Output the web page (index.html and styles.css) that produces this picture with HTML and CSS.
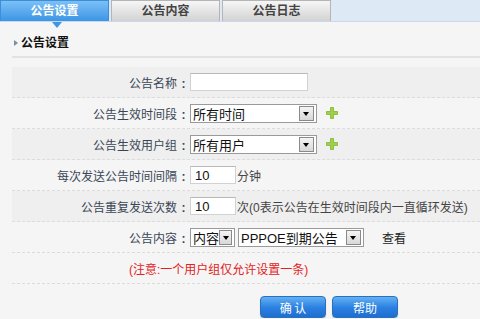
FILE: index.html
```html
<!DOCTYPE html>
<html lang="zh-CN">
<head>
    <meta charset="UTF-8">
    <title>公告设置</title>
    <link rel="stylesheet" href="styles.css">
</head>
<body>

    <div class="tabs">
        <div class="tab active">公告设置</div>
        <div class="tab">公告内容</div>
        <div class="tab">公告日志</div>
    </div>

    <h3 class="section-title">公告设置</h3>

    <div class="form">
        <div class="row shade">
            <label class="label">公告名称<span class="colon">:</span></label>
            <div class="field"><input class="text wide" type="text"></div>
        </div>
        <div class="row">
            <label class="label">公告生效时间段<span class="colon">:</span></label>
            <div class="field">
                <div class="select" style="width:127px"><span>所有时间</span><i class="arrow"></i></div>
                <svg class="plus" width="12" height="12" viewBox="0 0 12 12"><path d="M4.5 0.5h3v4h4v3h-4v4h-3v-4h-4v-3h4z" fill="#9fd04a" stroke="#7fb52e" stroke-width="0.8" stroke-linejoin="round"/></svg>
            </div>
        </div>
        <div class="row shade">
            <label class="label">公告生效用户组<span class="colon">:</span></label>
            <div class="field">
                <div class="select" style="width:127px"><span>所有用户</span><i class="arrow"></i></div>
                <svg class="plus" width="12" height="12" viewBox="0 0 12 12"><path d="M4.5 0.5h3v4h4v3h-4v4h-3v-4h-4v-3h4z" fill="#9fd04a" stroke="#7fb52e" stroke-width="0.8" stroke-linejoin="round"/></svg>
            </div>
        </div>
        <div class="row">
            <label class="label">每次发送公告时间间隔<span class="colon">:</span></label>
            <div class="field"><input class="text short" type="text" value="10"><span class="unit">分钟</span></div>
        </div>
        <div class="row shade">
            <label class="label">公告重复发送次数<span class="colon">:</span></label>
            <div class="field"><input class="text short" type="text" value="10"><span class="unit">次(0表示公告在生效时间段内一直循环发送)</span></div>
        </div>
        <div class="row">
            <label class="label">公告内容<span class="colon">:</span></label>
            <div class="field">
                <div class="select" style="width:45px"><span>内容</span><i class="arrow"></i></div>
                <div class="select" style="width:126px"><span>PPPOE到期公告</span><i class="arrow"></i></div>
                <a class="view">查看</a>
            </div>
        </div>
        <div class="row notice">(注意:一个用户组仅允许设置一条)</div>
    </div>

    <div class="buttons">
        <button class="btn">确 认</button>
        <button class="btn">帮助</button>
    </div>

</body>
</html>
```

FILE: styles.css
```css
body {
    margin: 0;
    background: #f5f5f5;
    font-family: "Liberation Sans", "Noto Sans CJK SC", sans-serif;
    font-size: 12px;
    color: #333;
}

/* Вкладки */
.tabs {
    display: flex;
    height: 21px;
    background: #dde9f5;
    border-bottom: 1px solid #c9d9e9;
}

.tab {
    position: relative;
    width: 107px;
    margin-right: 2px;
    text-align: center;
    line-height: 20px;
    font-weight: bold;
    color: #444;
    border: 1px solid #b5b5b5;
    border-bottom: none;
    background: linear-gradient(#f6f6f6, #d2d2d2);
}

.tab.active {
    color: #fff;
    border-color: #3b8fd8;
    background: linear-gradient(#7cc0f6, #3c95e6);
}

.tab.active::after {
    content: "";
    position: absolute;
    left: 51px;
    top: 21px;
    border-left: 5px solid transparent;
    border-right: 5px solid transparent;
    border-top: 6px solid #3c95e6;
}

/* Заголовок */
.section-title {
    margin: 13px 0 0 12px;
    padding: 0 0 4px 9px;
    position: relative;
    font-size: 12px;
    line-height: 17px;
    color: #111;
    border-bottom: 2px solid #e2e2e2;
}

.section-title::before {
    content: "";
    position: absolute;
    left: 2px;
    top: 5px;
    border-top: 3px solid transparent;
    border-bottom: 3px solid transparent;
    border-left: 4px solid #7d8da0;
}

/* Форма */
.form {
    margin: 9px 0 0 12px;
}

.row {
    display: flex;
    align-items: center;
    height: 30px;
    border-bottom: 1px dashed #dcdcdc;
}

.row.shade {
    background: #efefef;
}

.label {
    width: 178px;
    text-align: right;
    color: #3a4656;
    flex-shrink: 0;
}

/* двоеточие по центру ячейки */
.colon {
    display: inline-block;
    width: 13px;
    text-align: center;
    font-weight: bold;
}

.field {
    display: flex;
    align-items: center;
}

.text {
    box-sizing: border-box;
    height: 18px;
    padding: 0 4px;
    border: 1px solid #d2d2d2;
    border-top-color: #b8b8b8;
    background: #fff;
    font: 13px "Liberation Sans", "Noto Sans CJK SC", sans-serif;
    color: #111;
    outline: none;
}

.text.wide { width: 118px; }
.text.short { width: 46px; }

.unit {
    margin-left: 1px;
    font-size: 12px;
    color: #444;
}

.select {
    box-sizing: border-box;
    display: flex;
    align-items: center;
    justify-content: space-between;
    height: 19px;
    margin-right: 3px;
    border: 1px solid #9a9a9a;
    background: #fff;
    font-size: 13px;
    color: #111;
}

.select span {
    padding-left: 2px;
    white-space: nowrap;
}

.select .arrow {
    position: relative;
    width: 13px;
    height: 13px;
    margin-right: 2px;
    border: 1px solid #8a8a8a;
    background: linear-gradient(#f4f4f4, #d8d8d8);
}

.select .arrow::after {
    content: "";
    position: absolute;
    left: 3px;
    top: 5px;
    border-left: 3.5px solid transparent;
    border-right: 3.5px solid transparent;
    border-top: 4px solid #000;
}

.plus {
    margin-left: 6px;
}

.view {
    margin-left: 15px;
    font-size: 12px;
    color: #222;
}

.notice {
    padding-left: 117px;
    color: #e32222;
}

/* Кнопки */
.buttons {
    display: flex;
    gap: 6px;
    padding: 12px 0 0 260px;
}

.btn {
    width: 66px;
    height: 22px;
    padding: 0;
    border: 1px solid #2a6fc0;
    border-radius: 4px;
    background: linear-gradient(#62b0f4, #2a7fe0 55%, #1f6ed0);
    color: #fff;
    font: 12px "Noto Sans CJK SC", sans-serif;
    box-shadow: 0 1px 1px rgba(0, 0, 0, 0.2);
}
```
